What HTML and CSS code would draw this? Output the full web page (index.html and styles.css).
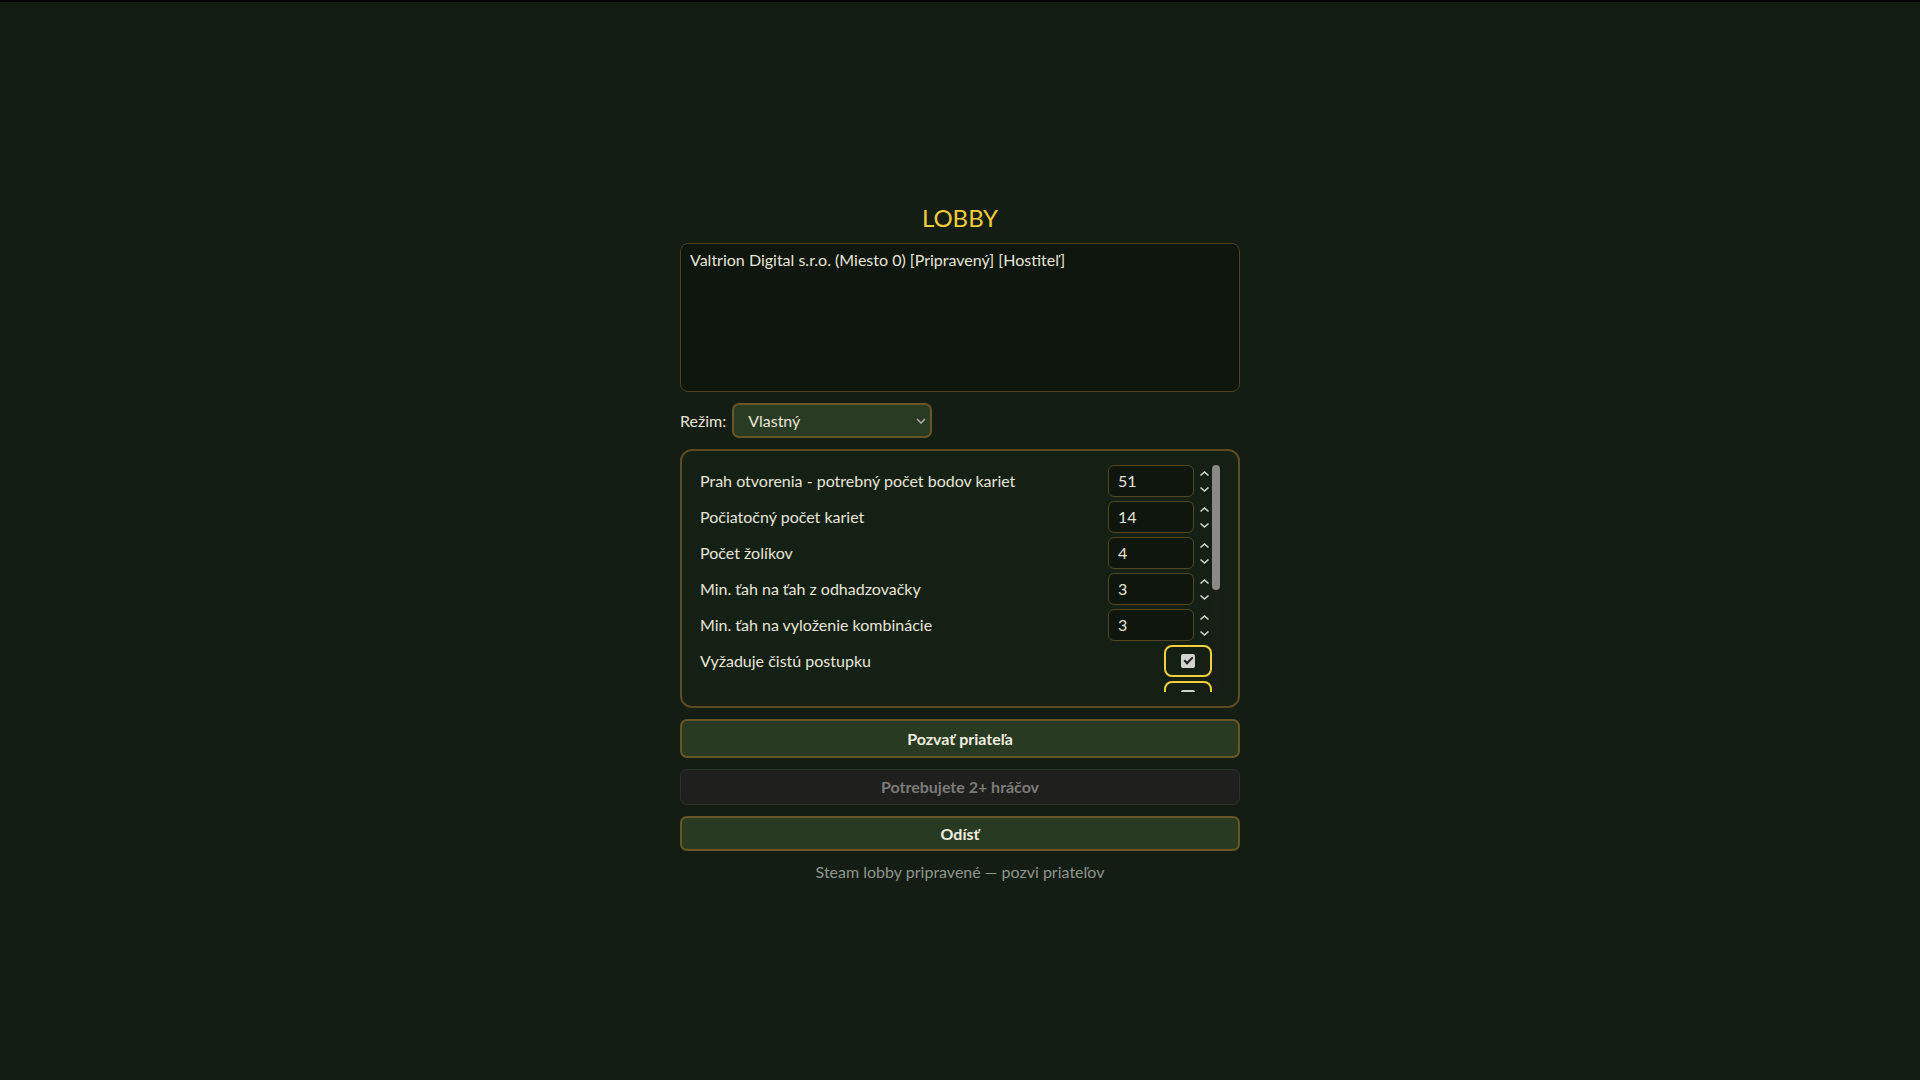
FILE: index.html
```html
<!DOCTYPE html>
<html lang="sk">
<head>
    <meta charset="UTF-8">
    <meta name="viewport" content="width=device-width, initial-scale=1.0">
    <title>Lobby</title>
    <link rel="stylesheet" href="styles.css">
</head>
<body>

    <div class="lobby">
        <h1 class="lobby-title">LOBBY</h1>

        <div class="player-list">
            <div class="player">Valtrion Digital s.r.o. (Miesto 0) [Pripravený] [Hostiteľ]</div>
        </div>

        <div class="mode-row">
            <label for="mode">Režim:</label>
            <div class="select-wrap">
                <select id="mode">
                    <option>Vlastný</option>
                    <option>Klasický</option>
                    <option>Rýchly</option>
                </select>
                <svg class="select-arrow" width="10" height="6" viewBox="0 0 10 6"><path d="M1 1 L5 5 L9 1" fill="none" stroke="#a9a9a0" stroke-width="1.6"/></svg>
            </div>
        </div>

        <div class="settings">
            <div class="settings-scroll">
                <div class="row">
                    <span>Prah otvorenia - potrebný počet bodov kariet</span>
                    <div class="num"><input type="number" value="51"><span class="spin"><svg width="18" height="32" viewBox="0 0 18 32"><path d="M6.5 10.5 L10.5 7 L14.5 10.5 M6.5 22.5 L10.5 26 L14.5 22.5" fill="none" stroke="#d6d6d0" stroke-width="1.6"/></svg></span></div>
                </div>
                <div class="row">
                    <span>Počiatočný počet kariet</span>
                    <div class="num"><input type="number" value="14"><span class="spin"><svg width="18" height="32" viewBox="0 0 18 32"><path d="M6.5 10.5 L10.5 7 L14.5 10.5 M6.5 22.5 L10.5 26 L14.5 22.5" fill="none" stroke="#d6d6d0" stroke-width="1.6"/></svg></span></div>
                </div>
                <div class="row">
                    <span>Počet žolíkov</span>
                    <div class="num"><input type="number" value="4"><span class="spin"><svg width="18" height="32" viewBox="0 0 18 32"><path d="M6.5 10.5 L10.5 7 L14.5 10.5 M6.5 22.5 L10.5 26 L14.5 22.5" fill="none" stroke="#d6d6d0" stroke-width="1.6"/></svg></span></div>
                </div>
                <div class="row">
                    <span>Min. ťah na ťah z odhadzovačky</span>
                    <div class="num"><input type="number" value="3"><span class="spin"><svg width="18" height="32" viewBox="0 0 18 32"><path d="M6.5 10.5 L10.5 7 L14.5 10.5 M6.5 22.5 L10.5 26 L14.5 22.5" fill="none" stroke="#d6d6d0" stroke-width="1.6"/></svg></span></div>
                </div>
                <div class="row">
                    <span>Min. ťah na vyloženie kombinácie</span>
                    <div class="num"><input type="number" value="3"><span class="spin"><svg width="18" height="32" viewBox="0 0 18 32"><path d="M6.5 10.5 L10.5 7 L14.5 10.5 M6.5 22.5 L10.5 26 L14.5 22.5" fill="none" stroke="#d6d6d0" stroke-width="1.6"/></svg></span></div>
                </div>
                <div class="row">
                    <span>Vyžaduje čistú postupku</span>
                    <label class="check"><input type="checkbox" checked></label>
                </div>
                <div class="row">
                    <span>Možnosť vymeniť žolíka</span>
                    <label class="check"><input type="checkbox" checked></label>
                </div>
                <div class="row">
                    <span>Povoliť žolíka pri otvorení</span>
                    <label class="check"><input type="checkbox" checked></label>
                </div>
                <div class="row">
                    <span>Ťahať z odhadzovačky pred otvorením</span>
                    <label class="check"><input type="checkbox"></label>
                </div>
                <div class="row">
                    <span>Bonus za zatvorenie z ruky</span>
                    <label class="check"><input type="checkbox" checked></label>
                </div>
                <div class="row">
                    <span>Zobraziť body súperov</span>
                    <label class="check"><input type="checkbox"></label>
                </div>
            </div>
            <div class="scrollbar"><div class="scrollbar-thumb"></div></div>
        </div>

        <button class="btn">Pozvať priateľa</button>
        <button class="btn btn-disabled" disabled>Potrebujete 2+ hráčov</button>
        <button class="btn btn-leave">Odísť</button>

        <p class="status">Steam lobby pripravené — pozvi priateľov</p>
    </div>

</body>
</html>
```

FILE: styles.css
```css
body {
    margin: 0;
    min-height: 100vh;
    box-sizing: border-box;
    border-top: 2px solid #000;
    background-color: #131d13;
    color: #e7e5d8;
    font-family: Lato, "Noto Sans", sans-serif;
    font-size: 16px;
    display: flex;
    align-items: center;
    justify-content: center;
}

.lobby {
    width: 560px;
    margin-top: 2px;
    display: flex;
    flex-direction: column;
    gap: 11px;
}

.lobby-title {
    margin: 0;
    text-align: center;
    font-size: 24px;
    font-weight: 400;
    line-height: 29px;
    color: #f2cb3b;
}

.player-list {
    height: 149px;
    box-sizing: border-box;
    border: 1px solid #4d3f1f;
    border-radius: 8px;
    background-color: #0e160d;
    padding: 6px 9px;
    line-height: 1.2;
}

.mode-row {
    display: flex;
    align-items: center;
    gap: 6px;
}

.select-wrap {
    position: relative;
}

.select-wrap select {
    width: 200px;
    height: 35px;
    appearance: none;
    background-color: #2a3b23;
    border: 2px solid #6b5526;
    border-radius: 7px;
    color: #e7e5d8;
    font-family: inherit;
    font-size: 16px;
    padding: 0 30px 0 14px;
    outline: none;
}

.select-arrow {
    position: absolute;
    right: 6px;
    top: 15px;
    pointer-events: none;
}

.settings {
    height: 259px;
    box-sizing: border-box;
    border: 2px solid #5d4a1f;
    border-radius: 12px;
    padding: 14px 18px;
    background-color: #152015;
    display: flex;
}

.settings-scroll {
    flex: 1;
    height: 100%;
    overflow: hidden;
    display: flex;
    flex-direction: column;
    gap: 4px;
}

.scrollbar {
    width: 8px;
    height: 100%;
    background-color: #1a1e19;
}

.scrollbar-thumb {
    height: 125px;
    background-color: #898987;
    border-radius: 4px;
}

.row {
    flex-shrink: 0;
    height: 32px;
    display: flex;
    align-items: center;
    justify-content: space-between;
}

.num {
    display: flex;
    align-items: center;
}

.num input {
    width: 86px;
    height: 32px;
    box-sizing: border-box;
    border: 1px solid #55461d;
    border-radius: 6px;
    background-color: #0e160d;
    color: #e7e5d8;
    font-family: inherit;
    font-size: 16px;
    padding: 0 9px;
    outline: none;
    -moz-appearance: textfield;
}

.num input::-webkit-inner-spin-button,
.num input::-webkit-outer-spin-button {
    -webkit-appearance: none;
    margin: 0;
}

.spin {
    width: 18px;
    height: 32px;
    display: flex;
}

.check {
    width: 48px;
    height: 32px;
    box-sizing: border-box;
    border: 2px solid #f2cd3c;
    border-radius: 8px;
    display: flex;
    align-items: center;
    justify-content: center;
}

.check input {
    appearance: none;
    margin: 0;
    width: 14px;
    height: 14px;
    border-radius: 2px;
    background-color: #d2d2cf;
    position: relative;
}

.check input:checked::after {
    content: "";
    position: absolute;
    left: 4.5px;
    top: 1.5px;
    width: 3px;
    height: 7px;
    border: solid #1c1c1c;
    border-width: 0 2px 2px 0;
    transform: rotate(45deg);
}

.btn {
    height: 39px;
    box-sizing: border-box;
    border: 2px solid #6b5426;
    border-radius: 7px;
    background-color: #283a21;
    color: #f0eee0;
    font-family: inherit;
    font-size: 16px;
    font-weight: 700;
    cursor: pointer;
}

.btn-disabled {
    height: 36px;
    border: 1px solid #2e302c;
    background-color: #1f201e;
    color: #7b7b77;
    cursor: default;
}

.btn-leave {
    height: 35px;
}

.status {
    margin: 0;
    text-align: center;
    line-height: 1.2;
    color: #8f958b;
}
```
